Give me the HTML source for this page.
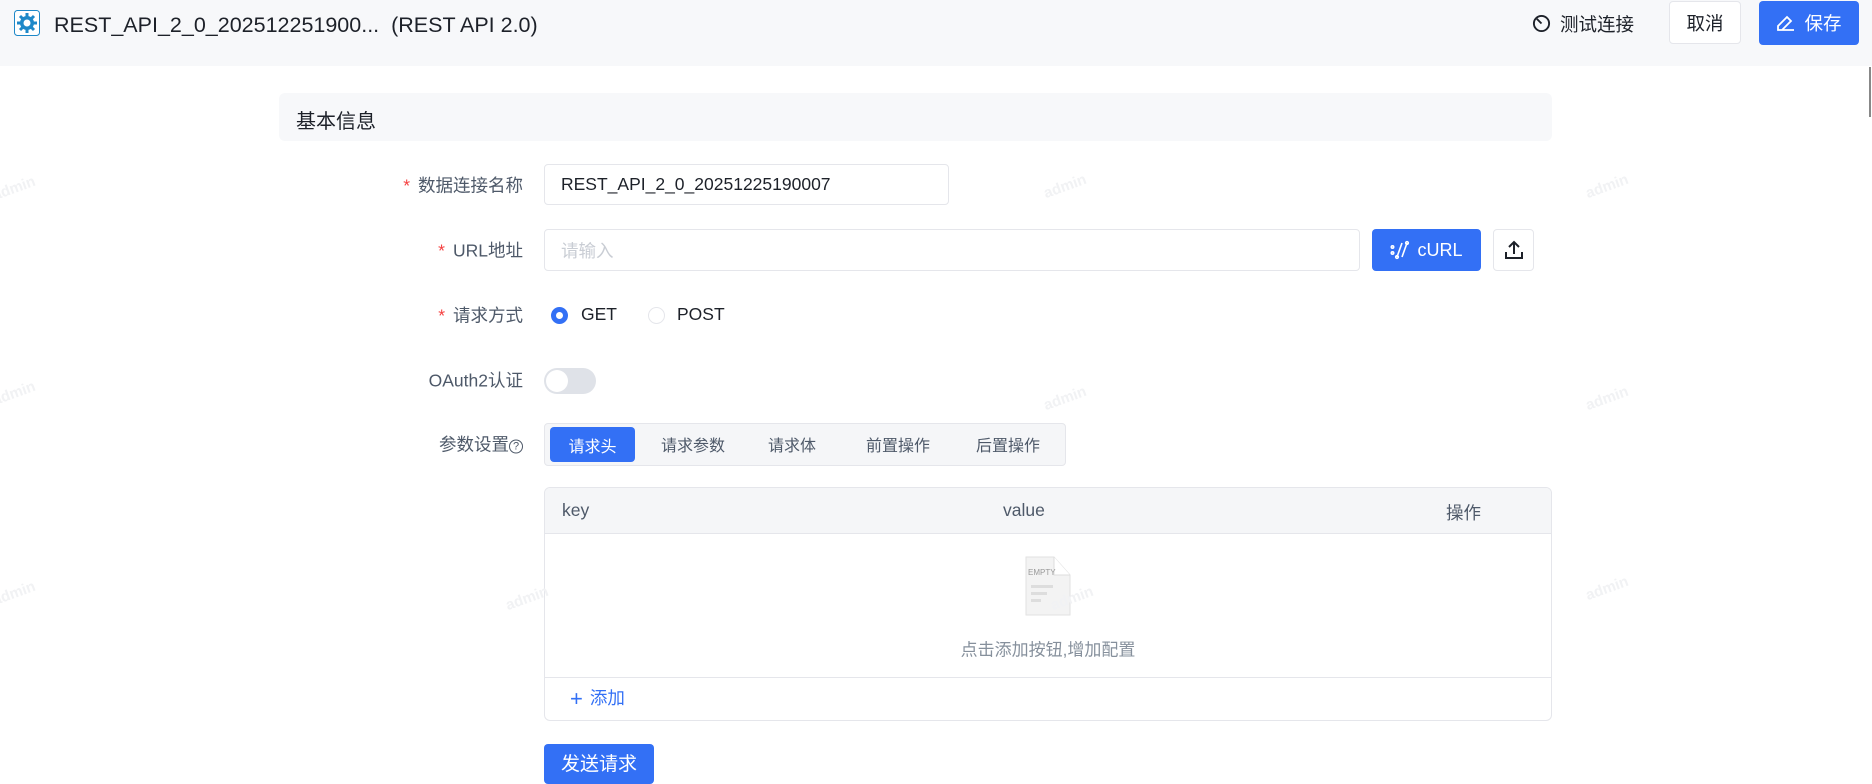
<!DOCTYPE html>
<html><head><meta charset="utf-8"><style>
*{box-sizing:border-box;margin:0;padding:0}
body{width:1872px;height:771px;overflow:hidden;background:#fff;font-family:"Liberation Sans","Noto Sans CJK SC",sans-serif;color:#1d2129;position:relative;font-size:17.5px}
.abs{position:absolute}
.hdr{left:0;top:0;width:1872px;height:66px;background:#f7f8fa}
.btn{position:absolute;border-radius:4px;display:flex;align-items:center;justify-content:center}
.lbl{position:absolute;right:1349px;color:#4e5969;white-space:nowrap;transform:translateY(-50%)}
.lbl b{color:#f53f3f;font-weight:normal;margin-right:8px}
.inp{position:absolute;border:1px solid #e5e6eb;border-radius:4px;padding-left:16px;display:flex;align-items:center}
.wm{position:absolute;color:#f1f2f4;font-size:15px;transform:rotate(-20deg);font-weight:bold}
</style></head><body>
<div class="abs hdr"></div>
<svg class="abs" style="left:14px;top:10px" width="26" height="26" viewBox="0 0 26 26"><rect x="0.5" y="0.5" width="25" height="25" rx="3" fill="#fff" stroke="#1e88c8"/><circle cx="13" cy="13" r="7" fill="#1e88c8"/><g stroke="#1e88c8" stroke-width="3"><line x1="13" y1="3" x2="13" y2="23"/><line x1="3" y1="13" x2="23" y2="13"/><line x1="6" y1="6" x2="20" y2="20"/><line x1="20" y1="6" x2="6" y2="20"/></g><circle cx="13" cy="13" r="3.5" fill="#fff"/></svg>
<div class="abs" style="left:54px;top:13px;font-size:21.5px;color:#1d2129">REST_API_2_0_202512251900...&nbsp; (REST API 2.0)</div>
<svg class="abs" style="left:1532px;top:14px" width="19" height="19" viewBox="0 0 20 20" fill="none" stroke="#1d2129" stroke-width="2"><circle cx="10" cy="10" r="8"/><line x1="5" y1="5" x2="10" y2="10"/></svg>
<div class="abs" style="left:1560px;top:11px;font-size:18.5px">测试连接</div>
<div class="btn" style="left:1669px;top:1px;width:72px;height:43px;border:1px solid #e5e6eb;background:#fff;font-size:18.5px">取消</div>
<div class="btn" style="left:1759px;top:1px;width:100px;height:44px;background:#3370f5;color:#fff;font-size:18.5px"><svg width="20" height="18" viewBox="0 0 20 18" fill="none" stroke="#fff" stroke-width="1.8" style="margin-right:8px"><path d="M2 16 L2 12 L11 3 L15 7 L6 16 Z M2 16 H18"/></svg>保存</div>
<div class="abs" style="left:1869px;top:67px;width:2px;height:50px;background:#888"></div>

<div class="abs" style="left:279px;top:93px;width:1273px;height:48px;background:#f7f8fa;border-radius:6px"></div>
<div class="abs" style="left:296px;top:105px;font-size:20px">基本信息</div>

<div class="lbl" style="top:185px"><b>*</b>数据连接名称</div>
<div class="inp" style="left:544px;top:164px;width:405px;height:41px">REST_API_2_0_20251225190007</div>
<div class="lbl" style="top:250px"><b>*</b>URL地址</div>
<div class="inp" style="left:544px;top:229px;width:816px;height:42px;color:#c9cdd4">请输入</div>
<div class="btn" style="left:1372px;top:229px;width:109px;height:42px;background:#3370f5;color:#fff;font-size:18px"><svg width="20" height="20" viewBox="0 0 20 20" fill="none" stroke="#fff" stroke-width="1.6" style="margin-right:7px"><circle cx="2.5" cy="7" r="1.2"/><circle cx="2.5" cy="13" r="1.2"/><line x1="7" y1="17" x2="12" y2="3"/><line x1="12" y1="17" x2="17" y2="3"/><circle cx="7" cy="17" r="1.3"/><circle cx="17" cy="3" r="1.3"/></svg>cURL</div>
<div class="btn" style="left:1493px;top:229px;width:41px;height:42px;border:1px solid #e5e6eb"><svg width="20" height="20" viewBox="0 0 20 20" fill="none" stroke="#1d2129" stroke-width="2"><path d="M10 14V2M5 7l5-5 5 5M2 12v6h16v-6"/></svg></div>

<div class="lbl" style="top:315px"><b>*</b>请求方式</div>
<div class="abs" style="left:551px;top:307px;width:17px;height:17px;border-radius:50%;border:5px solid #3370f5;background:#fff"></div>
<div class="abs" style="left:581px;top:304px">GET</div>
<div class="abs" style="left:648px;top:307px;width:17px;height:17px;border-radius:50%;border:1px solid #e5e6eb"></div>
<div class="abs" style="left:677px;top:304px">POST</div>

<div class="lbl" style="top:380px">OAuth2认证</div>
<div class="abs" style="left:544px;top:368px;width:52px;height:26px;border-radius:13px;background:#dfe2e8"></div>
<div class="abs" style="left:546px;top:370px;width:22px;height:22px;border-radius:50%;background:#fff"></div>

<div class="lbl" style="top:444px">参数设置<span style="border:1px solid #4e5969;border-radius:50%;display:inline-block;width:14px;height:14px;line-height:12px;text-align:center;font-size:11px;vertical-align:1px">?</span></div>
<div class="abs" style="left:544px;top:423px;width:522px;height:43px;background:#f5f6f8;border:1px solid #e5e6eb;border-radius:4px"></div>
<div class="btn" style="left:550px;top:427px;width:85px;height:35px;background:#3370f5;color:#fff;font-size:16px">请求头</div>
<div class="abs" style="left:693px;top:444px;transform:translate(-50%,-50%);font-size:16px;color:#4e5969">请求参数</div>
<div class="abs" style="left:792px;top:444px;transform:translate(-50%,-50%);font-size:16px;color:#4e5969">请求体</div>
<div class="abs" style="left:898px;top:444px;transform:translate(-50%,-50%);font-size:16px;color:#4e5969">前置操作</div>
<div class="abs" style="left:1008px;top:444px;transform:translate(-50%,-50%);font-size:16px;color:#4e5969">后置操作</div>

<div class="abs" style="left:544px;top:487px;width:1008px;height:234px;border:1px solid #e5e6eb;border-radius:6px;overflow:hidden">
 <div style="height:46px;background:#f5f6f8;border-bottom:1px solid #e5e6eb"></div>
 <div class="abs" style="left:0;top:189px;width:100%;border-top:1px solid #e5e6eb"></div>
</div>
<div class="abs" style="left:562px;top:500px;color:#4e5969">key</div>
<div class="abs" style="left:1003px;top:500px;color:#4e5969">value</div>
<div class="abs" style="left:1446px;top:500px;color:#4e5969">操作</div>
<svg class="abs" style="left:1024px;top:555px" width="50" height="62" viewBox="0 0 50 62"><path d="M2 2H30L46 20V60H2Z" fill="#f3f3f3" stroke="#e2e2e2"/><path d="M30 2V20H46" fill="#fff" stroke="#ddd"/><text x="4" y="20" font-size="8" fill="#999" font-family="Liberation Sans">EMPTY</text><rect x="7" y="30" width="22" height="3" fill="#ddd"/><rect x="7" y="37" width="16" height="3" fill="#ddd"/><rect x="7" y="44" width="10" height="3" fill="#ddd"/></svg>
<div class="abs" style="left:1048px;top:648px;transform:translate(-50%,-50%);color:#86909c;font-size:17px;white-space:nowrap">点击添加按钮,增加配置</div>
<div class="abs" style="left:570px;top:685px;color:#3370f5;font-size:17.5px"><span style="font-size:22px;margin-right:7px;vertical-align:-2px">+</span>添加</div>

<div class="btn" style="left:544px;top:744px;width:110px;height:40px;background:#3370f5;color:#fff;font-size:19px;align-items:flex-start;padding-top:5px">发送请求</div>

<div class="wm" style="left:-8px;top:180px">admin</div>
<div class="wm" style="left:1043px;top:178px">admin</div>
<div class="wm" style="left:1585px;top:178px">admin</div>
<div class="wm" style="left:-8px;top:385px">admin</div>
<div class="wm" style="left:1043px;top:390px">admin</div>
<div class="wm" style="left:1585px;top:390px">admin</div>
<div class="wm" style="left:-8px;top:585px">admin</div>
<div class="wm" style="left:505px;top:590px">admin</div>
<div class="wm" style="left:1050px;top:590px">admin</div>
<div class="wm" style="left:1585px;top:580px">admin</div>
</body></html>
